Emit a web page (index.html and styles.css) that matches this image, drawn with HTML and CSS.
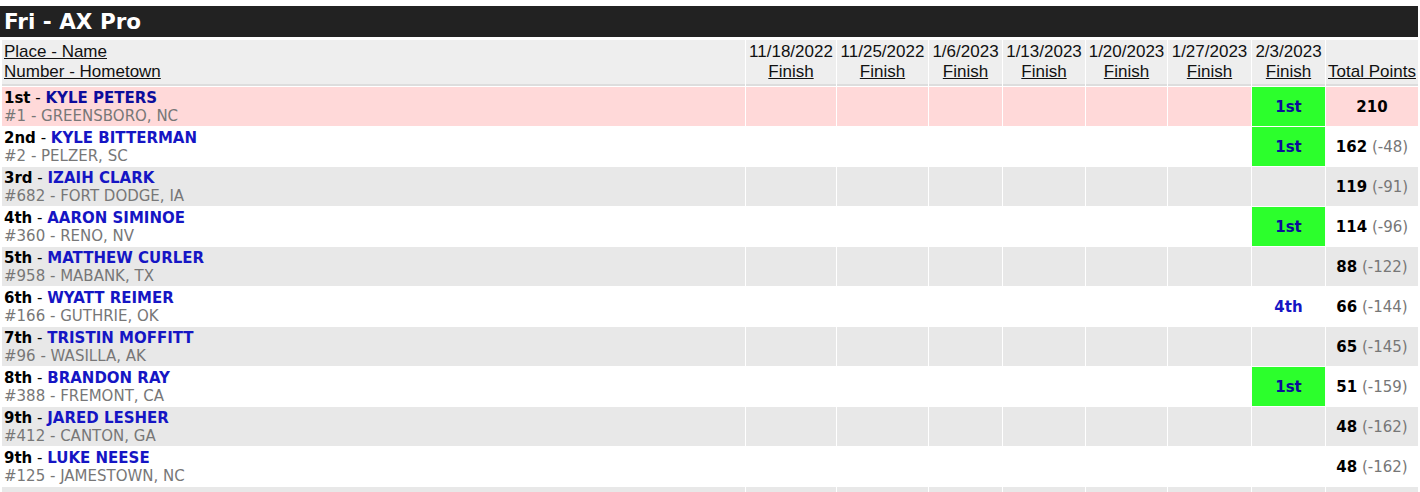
FILE: index.html
```html
<!DOCTYPE html>
<html>
<head>
<meta charset="utf-8">
<link rel="stylesheet" href="styles.css">
</head>
<body>
<div class="title">Fri - AX Pro</div>
<table class="standings">
<thead>
<tr>
<th class="h-name"><u>Place - Name</u><br><u>Number - Hometown</u></th>
<th class="h-date w90">11/18/2022<br><u>Finish</u></th>
<th class="h-date w91">11/25/2022<br><u>Finish</u></th>
<th class="h-date w73">1/6/2023<br><u>Finish</u></th>
<th class="h-date w82">1/13/2023<br><u>Finish</u></th>
<th class="h-date w81">1/20/2023<br><u>Finish</u></th>
<th class="h-date w83">1/27/2023<br><u>Finish</u></th>
<th class="h-date w73">2/3/2023<br><u>Finish</u></th>
<th class="h-date w92"><u>Total Points</u></th>
</tr>
</thead>
<tbody>
<tr class="r-lead">
<td class="name"><b>1st</b> - <span class="driver">KYLE PETERS</span><br><span class="town">#1 - GREENSBORO, NC</span></td>
<td></td><td></td><td></td><td></td><td></td><td></td>
<td class="fin win">1st</td>
<td class="pts"><b>210</b></td>
</tr>
<tr class="r-white">
<td class="name"><b>2nd</b> - <span class="driver">KYLE BITTERMAN</span><br><span class="town">#2 - PELZER, SC</span></td>
<td></td><td></td><td></td><td></td><td></td><td></td>
<td class="fin win">1st</td>
<td class="pts"><b>162</b> <span class="diff">(-48)</span></td>
</tr>
<tr class="r-gray">
<td class="name"><b>3rd</b> - <span class="driver">IZAIH CLARK</span><br><span class="town">#682 - FORT DODGE, IA</span></td>
<td></td><td></td><td></td><td></td><td></td><td></td>
<td class="fin"></td>
<td class="pts"><b>119</b> <span class="diff">(-91)</span></td>
</tr>
<tr class="r-white">
<td class="name"><b>4th</b> - <span class="driver">AARON SIMINOE</span><br><span class="town">#360 - RENO, NV</span></td>
<td></td><td></td><td></td><td></td><td></td><td></td>
<td class="fin win">1st</td>
<td class="pts"><b>114</b> <span class="diff">(-96)</span></td>
</tr>
<tr class="r-gray">
<td class="name"><b>5th</b> - <span class="driver">MATTHEW CURLER</span><br><span class="town">#958 - MABANK, TX</span></td>
<td></td><td></td><td></td><td></td><td></td><td></td>
<td class="fin"></td>
<td class="pts"><b>88</b> <span class="diff">(-122)</span></td>
</tr>
<tr class="r-white">
<td class="name"><b>6th</b> - <span class="driver">WYATT REIMER</span><br><span class="town">#166 - GUTHRIE, OK</span></td>
<td></td><td></td><td></td><td></td><td></td><td></td>
<td class="fin">4th</td>
<td class="pts"><b>66</b> <span class="diff">(-144)</span></td>
</tr>
<tr class="r-gray">
<td class="name"><b>7th</b> - <span class="driver">TRISTIN MOFFITT</span><br><span class="town">#96 - WASILLA, AK</span></td>
<td></td><td></td><td></td><td></td><td></td><td></td>
<td class="fin"></td>
<td class="pts"><b>65</b> <span class="diff">(-145)</span></td>
</tr>
<tr class="r-white">
<td class="name"><b>8th</b> - <span class="driver">BRANDON RAY</span><br><span class="town">#388 - FREMONT, CA</span></td>
<td></td><td></td><td></td><td></td><td></td><td></td>
<td class="fin win">1st</td>
<td class="pts"><b>51</b> <span class="diff">(-159)</span></td>
</tr>
<tr class="r-gray">
<td class="name"><b>9th</b> - <span class="driver">JARED LESHER</span><br><span class="town">#412 - CANTON, GA</span></td>
<td></td><td></td><td></td><td></td><td></td><td></td>
<td class="fin"></td>
<td class="pts"><b>48</b> <span class="diff">(-162)</span></td>
</tr>
<tr class="r-white">
<td class="name"><b>9th</b> - <span class="driver">LUKE NEESE</span><br><span class="town">#125 - JAMESTOWN, NC</span></td>
<td></td><td></td><td></td><td></td><td></td><td></td>
<td class="fin"></td>
<td class="pts"><b>48</b> <span class="diff">(-162)</span></td>
</tr>
<tr class="r-gray">
<td class="name"></td>
<td></td><td></td><td></td><td></td><td></td><td></td>
<td class="fin"></td>
<td class="pts"></td>
</tr>
</tbody>
</table>
</body>
</html>
```
FILE: styles.css
```css
html, body {
  margin: 0;
  padding: 0;
  background: #fff;
}
body {
  font-family: "DejaVu Sans", Verdana, sans-serif;
}
.title {
  margin: 6px 2px 0 0;
  height: 31px;
  line-height: 31px;
  padding-left: 4px;
  background: #222;
  color: #fff;
  font-weight: bold;
  font-size: 21.5px;
}
.standings {
  margin: 2px 0 0 1px;
  width: 1418px;
  border-collapse: separate;
  border-spacing: 1px;
  table-layout: fixed;
}
.standings th {
  box-sizing: border-box;
  background: #eee;
  border-bottom: 2px solid #ddd;
  padding: 2px 2px 2px 2px;
  font-family: "Liberation Sans", Arial, sans-serif;
  font-weight: normal;
  font-size: 17px;
  line-height: 20px;
  color: #111;
  vertical-align: bottom;
  white-space: nowrap;
}
.standings th.h-name { text-align: left; width: 743px; }
.standings th.h-date { text-align: center; }
.w90 { width: 90px; }
.w91 { width: 91px; }
.w73 { width: 73px; }
.w82 { width: 82px; }
.w81 { width: 81px; }
.w83 { width: 83px; }
.w92 { width: 92px; }
.standings td {
  padding: 2px 2px 1px 2px;
  height: 36px;
  font-size: 15px;
  line-height: 18px;
  color: #000;
  white-space: nowrap;
  overflow: hidden;
}
.r-lead td { background: #ffd9d9; }
.r-white td { background: #fff; }
.r-gray td { background: #e8e8e8; }
.driver {
  font-weight: bold;
  color: #1515c4;
}
.r-lead .driver { color: #0c0c9c; }
.town { color: #777; }
.standings td.fin {
  text-align: center;
  font-weight: bold;
  color: #1515c4;
}
.standings td.win {
  background: #2cff2c;
  color: #0c0c99;
}
.standings td.pts {
  text-align: center;
}
.diff { color: #777; }
```
